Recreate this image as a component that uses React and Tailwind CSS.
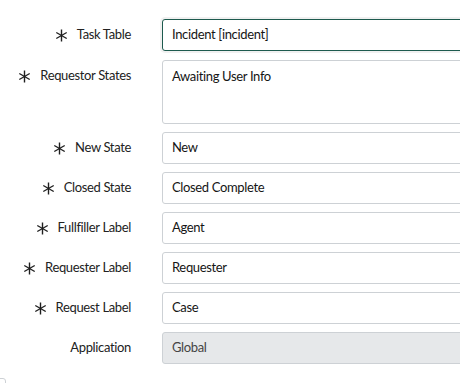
const Asterisk = () => (
  <svg width="13" height="13" viewBox="0 0 13 13" className="shrink-0">
    <g stroke="#1f1f1f" strokeWidth="1.4" strokeLinecap="butt">
      <line x1="6.5" y1="0.5" x2="6.5" y2="12.5" />
      <line x1="1.3" y1="3.5" x2="11.7" y2="9.5" />
      <line x1="1.3" y1="9.5" x2="11.7" y2="3.5" />
    </g>
  </svg>
);

const FieldRow = ({ label, required, children, className = 'mb-2' }) => (
  <div className={`flex items-start ${className}`}>
    <div className="w-[131px] h-8 shrink-0 flex items-center justify-end gap-[9px] text-[13px] text-[#222] tracking-[-0.35px]">
      {required && <Asterisk />}
      <span className="whitespace-nowrap">{label}</span>
    </div>
    <div className="ml-[31px] w-[340px] shrink-0">{children}</div>
  </div>
);

const TextBox = ({ value, focused = false, readOnly = false }) => (
  <div
    className={`h-8 px-[9px] flex items-center rounded-[3px] border text-[13px] tracking-[-0.35px] ${
      focused
        ? 'border-[#1d5a4e] shadow-[0_0_0_2px_rgba(0,0,0,0.06)]'
        : 'border-[#cdd1d5]'
    } ${readOnly ? 'bg-[#e6e8ea] text-[#444]' : 'bg-white text-[#151515]'}`}
  >
    {value}
  </div>
);

export default function App() {
  return (
    <div className="w-[460px] h-[383px] overflow-hidden bg-white font-['Lato',sans-serif] pt-[19px]">
      <FieldRow label="Task Table" required className="mb-[9px]">
        <TextBox value="Incident [incident]" focused />
      </FieldRow>
      <FieldRow label="Requestor States" required>
        <div className="h-16 px-[9px] pt-[6px] rounded-[3px] border border-[#cdd1d5] bg-white text-[13px] tracking-[-0.35px] text-[#151515]">
          Awaiting User Info
        </div>
      </FieldRow>
      <FieldRow label="New State" required>
        <TextBox value="New" />
      </FieldRow>
      <FieldRow label="Closed State" required>
        <TextBox value="Closed Complete" />
      </FieldRow>
      <FieldRow label="Fullfiller Label" required>
        <TextBox value="Agent" />
      </FieldRow>
      <FieldRow label="Requester Label" required>
        <TextBox value="Requester" />
      </FieldRow>
      <FieldRow label="Request Label" required>
        <TextBox value="Case" />
      </FieldRow>
      <FieldRow label="Application" className="mb-[14px]">
        <TextBox value="Global" readOnly />
      </FieldRow>
      <div className="w-[14px] h-[14px] -ml-[8px] rounded-[3px] border border-[#cdd1d5] bg-white" />
    </div>
  );
}
